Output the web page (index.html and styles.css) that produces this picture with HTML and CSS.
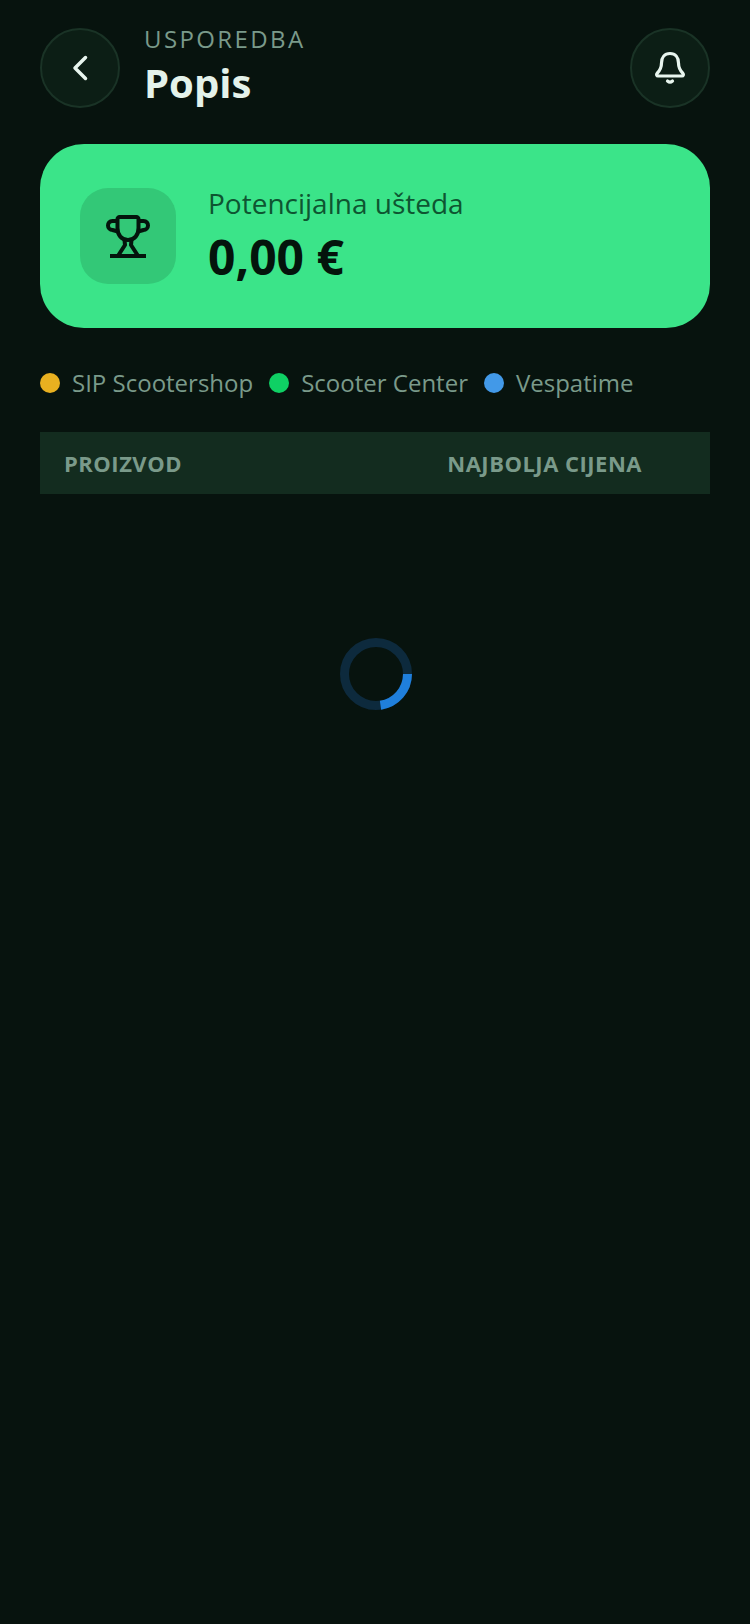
FILE: index.html
```html
<!DOCTYPE html>
<html>
<head>
    <meta charset="UTF-8">
    <title>Usporedba - Popis</title>
    <link rel="stylesheet" href="styles.css">
</head>
<body>
<header class="top-bar">
    <button class="round-btn" aria-label="Natrag">
        <svg width="40" height="40" viewBox="0 0 40 40" fill="none" stroke="#e8f5ee" stroke-width="3.500" stroke-linecap="round" stroke-linejoin="round">
            <path d="M25.500 9.500 L15 20 L25.500 30.500"/>
        </svg>
    </button>
    <div class="title-block">
        <div class="eyebrow">USPOREDBA</div>
        <h1>Popis</h1>
    </div>
    <button class="round-btn" aria-label="Obavijesti">
        <svg width="40" height="40" viewBox="0 0 40 40" fill="none" stroke="#e8f5ee" stroke-width="3.200" stroke-linecap="round" stroke-linejoin="round">
            <path d="M20 5.500c-5.500 0-8.500 4-8.500 9.500 0 4.500-1.500 7.500-4.500 10.500-.9 1-.3 2.500 1 2.500h24c1.300 0 1.900-1.500 1-2.500-3-3-4.500-6-4.500-10.500 0-5.500-3-9.500-8.500-9.500z"/>
            <path d="M17.500 33c1.500 1.300 3.500 1.300 5 0"/>
        </svg>
    </button>
</header>

<section class="savings-card">
    <div class="trophy-box">
        <svg width="48" height="48" viewBox="0 0 48 48" fill="none" stroke="#04140c" stroke-width="4" stroke-linejoin="round">
            <path d="M13.500 7c0-1 1-2 2-2h17c1 0 2 1 2 2v9c0 7-4 12-10.500 12s-10.500-5-10.500-12z"/>
            <path d="M13.500 9H8.500C5.500 9 4 11 4 13.500S6 18 8.500 18l5.500 1.500"/>
            <path d="M34.500 9h5c3 0 4.500 2 4.500 4.500S42 18 39.500 18l-5.500 1.500"/>
            <path d="M20.500 28l.5 5-6.500 10M27.500 28l-.5 5 6.500 10"/>
            <path d="M6 44h36"/>
        </svg>
    </div>
    <div>
        <div class="savings-label">Potencijalna ušteda</div>
        <div class="savings-value">0,00 €</div>
    </div>
</section>

<div class="legend">
    <div class="legend-item"><span class="dot dot-sip"></span>SIP Scootershop</div>
    <div class="legend-item"><span class="dot dot-center"></span>Scooter Center</div>
    <div class="legend-item"><span class="dot dot-vespa"></span>Vespatime</div>
</div>

<div class="table-head">
    <span>PROIZVOD</span>
    <span>NAJBOLJA CIJENA</span>
</div>

<div class="loading">
    <svg width="72" height="72" viewBox="0 0 72 72" fill="none" stroke-width="9">
        <circle cx="36" cy="36" r="31.500" stroke="#0d2a3d"/>
        <path d="M67.500 36A31.500 31.500 0 0 1 40.500 67.200" stroke="#1f7fdc"/>
    </svg>
</div>
</body>
</html>
```

FILE: styles.css
```css
* {
    box-sizing: border-box;
}

body {
    margin: 0;
    padding: 28px 40px 0;
    min-height: 1624px;
    font-family: "Open Sans", "Noto Sans", sans-serif;
    background-color: #07130e;
    color: #e8f5ee;
}

.top-bar {
    display: flex;
    align-items: center;
    height: 80px;
}

.round-btn {
    display: flex;
    align-items: center;
    justify-content: center;
    flex: none;
    width: 80px;
    height: 80px;
    padding: 0;
    border: 2px solid #1a3326;
    border-radius: 50%;
    background-color: #0c1e15;
}

.title-block {
    flex-grow: 1;
    align-self: flex-start;
    margin-left: 24px;
}

.eyebrow {
    font-size: 24px;
    line-height: 22px;
    letter-spacing: 2.400px;
    color: #7a9a8a;
}

h1 {
    margin: 10px 0 0;
    font-size: 40px;
    line-height: 46px;
    font-weight: 700;
    color: #e4f2ea;
}

.savings-card {
    display: flex;
    align-items: center;
    gap: 32px;
    height: 184px;
    margin-top: 36px;
    padding-left: 40px;
    border-radius: 44px;
    background-color: #3be489;
}

.trophy-box {
    display: flex;
    align-items: center;
    justify-content: center;
    width: 96px;
    height: 96px;
    border-radius: 28px;
    background-color: #33c877;
}

.savings-label {
    font-size: 28px;
    line-height: 36px;
    color: #0e5531;
}

.savings-value {
    margin-top: 6px;
    font-size: 48px;
    line-height: 60px;
    font-weight: 700;
    color: #04140c;
}

.legend {
    display: flex;
    gap: 16px;
    margin-top: 38px;
}

.legend-item {
    display: flex;
    align-items: center;
    gap: 12px;
    font-size: 24px;
    line-height: 34px;
    color: #7a9a8a;
}

.dot {
    width: 20px;
    height: 20px;
    border-radius: 50%;
}

.dot-sip {
    background-color: #e8b020;
}

.dot-center {
    background-color: #0fd064;
}

.dot-vespa {
    background-color: #4299e8;
}

.table-head {
    display: flex;
    justify-content: space-between;
    align-items: center;
    height: 62px;
    margin-top: 32px;
    padding: 0 68px 0 24px;
    font-size: 22px;
    font-weight: 700;
    letter-spacing: 0.500px;
    background-color: #132c1f;
    color: #7a9a8a;
}

.loading {
    display: flex;
    justify-content: center;
    padding: 144px 0 0 2px;
}

.loading svg {
    display: block;
}
```
